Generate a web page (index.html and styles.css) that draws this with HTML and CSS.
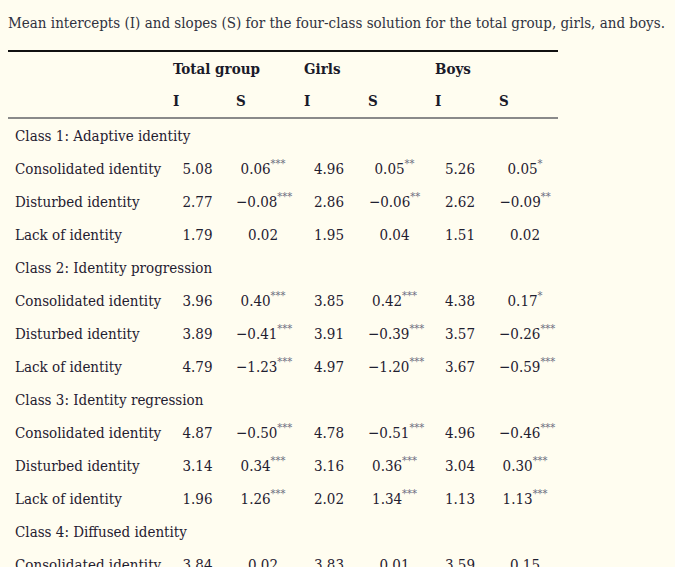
FILE: index.html
```html
<!DOCTYPE html>
<html>
<head>
<meta charset="utf-8">
<link rel="stylesheet" href="styles.css">
</head>
<body>
<p class="caption">Mean intercepts (I) and slopes (S) for the four-class solution for the total group, girls, and boys.</p>
<table class="data">
<colgroup>
<col class="c-label"><col class="c-i1"><col class="c-s1"><col class="c-i2"><col class="c-s2"><col class="c-i3"><col class="c-s3">
</colgroup>
<thead>
<tr class="top"><th></th><th colspan="2">Total group</th><th colspan="2">Girls</th><th colspan="2">Boys</th></tr>
<tr class="sub"><th></th><th>I</th><th>S</th><th>I</th><th>S</th><th>I</th><th>S</th></tr>
</thead>
<tbody>
<tr><td colspan="7" class="group">Class 1: Adaptive identity</td></tr>
<tr><td>Consolidated identity</td><td class="n">5.08</td><td class="n">0.06<sup>***</sup></td><td class="n">4.96</td><td class="n">0.05<sup>**</sup></td><td class="n">5.26</td><td class="n">0.05<sup>*</sup></td></tr>
<tr><td>Disturbed identity</td><td class="n">2.77</td><td class="n">−0.08<sup>***</sup></td><td class="n">2.86</td><td class="n">−0.06<sup>**</sup></td><td class="n">2.62</td><td class="n">−0.09<sup>**</sup></td></tr>
<tr><td>Lack of identity</td><td class="n">1.79</td><td class="n">0.02</td><td class="n">1.95</td><td class="n">0.04</td><td class="n">1.51</td><td class="n">0.02</td></tr>
<tr><td colspan="7" class="group">Class 2: Identity progression</td></tr>
<tr><td>Consolidated identity</td><td class="n">3.96</td><td class="n">0.40<sup>***</sup></td><td class="n">3.85</td><td class="n">0.42<sup>***</sup></td><td class="n">4.38</td><td class="n">0.17<sup>*</sup></td></tr>
<tr><td>Disturbed identity</td><td class="n">3.89</td><td class="n">−0.41<sup>***</sup></td><td class="n">3.91</td><td class="n">−0.39<sup>***</sup></td><td class="n">3.57</td><td class="n">−0.26<sup>***</sup></td></tr>
<tr><td>Lack of identity</td><td class="n">4.79</td><td class="n">−1.23<sup>***</sup></td><td class="n">4.97</td><td class="n">−1.20<sup>***</sup></td><td class="n">3.67</td><td class="n">−0.59<sup>***</sup></td></tr>
<tr><td colspan="7" class="group">Class 3: Identity regression</td></tr>
<tr><td>Consolidated identity</td><td class="n">4.87</td><td class="n">−0.50<sup>***</sup></td><td class="n">4.78</td><td class="n">−0.51<sup>***</sup></td><td class="n">4.96</td><td class="n">−0.46<sup>***</sup></td></tr>
<tr><td>Disturbed identity</td><td class="n">3.14</td><td class="n">0.34<sup>***</sup></td><td class="n">3.16</td><td class="n">0.36<sup>***</sup></td><td class="n">3.04</td><td class="n">0.30<sup>***</sup></td></tr>
<tr><td>Lack of identity</td><td class="n">1.96</td><td class="n">1.26<sup>***</sup></td><td class="n">2.02</td><td class="n">1.34<sup>***</sup></td><td class="n">1.13</td><td class="n">1.13<sup>***</sup></td></tr>
<tr><td colspan="7" class="group">Class 4: Diffused identity</td></tr>
<tr><td>Consolidated identity</td><td class="n">3.84</td><td class="n">0.02</td><td class="n">3.83</td><td class="n">0.01</td><td class="n">3.59</td><td class="n">0.15</td></tr>
</tbody>
</table>
</body>
</html>
```
FILE: styles.css
```css
html, body {
  background: #fffdf0;
}
body {
  margin: 8px;
  font-family: "DejaVu Serif", "Liberation Serif", serif;
  font-stretch: condensed;
  font-size: 15px;
  color: #1f2030;
}
.caption {
  margin: 6px 0 18px;
  color: #30323f;
  line-height: 18px;
}
.data {
  border-collapse: collapse;
  table-layout: fixed;
  width: 550px;
  border-top: 2px solid #111;
}
.c-label { width: 158px; }
.c-i1 { width: 63px; }
.c-s1 { width: 68px; }
.c-i2 { width: 64px; }
.c-s2 { width: 67px; }
.c-i3 { width: 64px; }
.c-s3 { width: 66px; }
.data th, .data td {
  height: 33px;
  padding: 2px 7px 0;
  box-sizing: border-box;
  vertical-align: middle;
  white-space: nowrap;
  text-align: left;
}
.data th {
  padding-top: 0;
  font-weight: bold;
  color: #1a1a2a;
}
.data thead .top th {
  height: 34px;
}
.data thead .sub th {
  border-bottom: 2px solid #8a8a8a;
}
.data td.n {
  text-align: center;
}
.data sup {
  font-size: 11px;
  color: #6c6e80;
  line-height: 0;
  vertical-align: 7px;
}
```
